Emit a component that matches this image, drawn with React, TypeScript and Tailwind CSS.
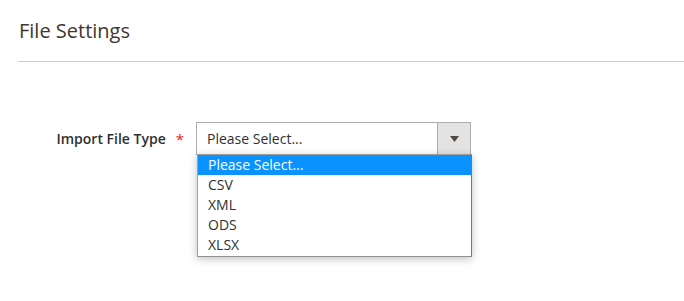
export default function App() {
  const options = ["Please Select...", "CSV", "XML", "ODS", "XLSX"];

  return (
    <div
      className="bg-white w-[684px] h-[301px] overflow-hidden"
      style={{ fontFamily: '"Open Sans", sans-serif' }}
    >
      <div className="pl-[18px] pt-[17px]">
        <h2 className="text-[20px] leading-[28px] text-[#41362f] pl-[1px]">File Settings</h2>
        <div className="mt-[16px] border-b border-[#cccccc]" />
      </div>

      <div className="flex items-start mt-[60px]">
        <div className="w-[196px] flex justify-end items-center h-[32px] pr-[12px]">
          <span className="text-[14px] font-semibold text-[#303030]">Import File Type</span>
          <span className="text-[#e22626] text-[15px] ml-[10px] mt-[2px]">*</span>
        </div>

        <div className="relative">
          <div className="flex w-[275px] h-[33px] border border-[#adadad] bg-white">
            <div className="flex-1 flex items-center pl-[10px] text-[14px] text-[#303030]">
              Please Select...
            </div>
            <div className="w-[33px] bg-[#e3e3e3] border-l border-[#adadad] flex items-center justify-center">
              <svg width="9" height="6" viewBox="0 0 9 6">
                <path d="M0 0 H9 L4.5 6 Z" fill="#514943" />
              </svg>
            </div>
          </div>

          <div className="absolute left-[1px] top-[32px] w-[275px] bg-white border border-[#a0a0a0] border-r-[#767676] border-b-[#909090] shadow-[0_2px_8px_rgba(0,0,0,0.25)] pb-[1px]">
            {options.map((o, i) => (
              <div
                key={o}
                className={
                  i === 0
                    ? "h-[20px] leading-[20px] pl-[10px] text-[14px] bg-[#0a93ff] text-white"
                    : "h-[20px] leading-[20px] pl-[10px] text-[14px] text-[#303030]"
                }
              >
                {o}
              </div>
            ))}
          </div>
        </div>
      </div>
    </div>
  );
}
